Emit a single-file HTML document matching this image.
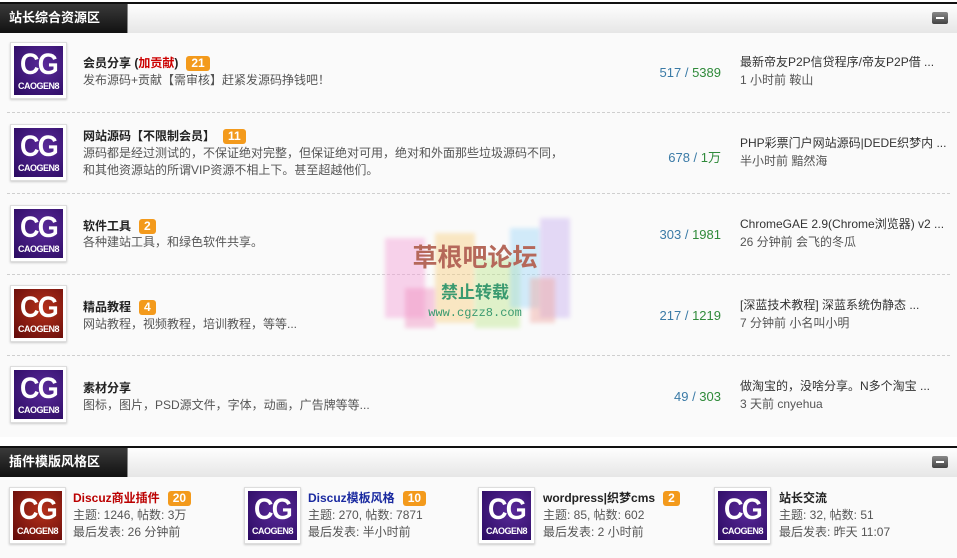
<!DOCTYPE html>
<html><head><meta charset="utf-8"><style>
*{margin:0;padding:0;box-sizing:border-box}
body{width:957px;height:558px;background:#fff;font:12px "Liberation Sans","Noto Sans CJK SC",sans-serif;color:#333;position:relative;overflow:hidden}
.hd{position:absolute;left:0;width:957px;height:31px;border-top:2px solid #111;background:linear-gradient(#fefefe,#e6e6e6)}
.tab{position:absolute;left:0;top:0;width:128px;height:29px;background:linear-gradient(#3a3a3a,#111);color:#fff;font-weight:bold;font-size:13px;line-height:27px;padding-left:9px;border-right:1px solid #888}
.mn{position:absolute;right:9px;top:8px;width:16px;height:12px;background:linear-gradient(#888,#444);border-radius:2px}
.mn:after{content:"";position:absolute;left:4px;top:5px;width:8px;height:2px;background:#fff}
.sec{position:absolute;left:0;width:957px;background:#fafafa}
.row{position:absolute;left:7px;width:943px;border-bottom:1px dashed #cfcfcf}
.ic{position:absolute;width:57px;height:57px;background:#fff;border:1px solid #ddd;box-shadow:0 1px 2px #ccc;padding:3px}
.ic div{width:49px;height:49px;color:#fff;text-align:center;font-weight:bold;font-family:"Liberation Sans",sans-serif}
.ic b{display:block;font-size:30px;line-height:32px;letter-spacing:-2px;padding-top:3px;transform:scaleX(.9)}
.ic i{display:block;font-style:normal;font-size:9px;line-height:10px;letter-spacing:-.5px}
.p{background:radial-gradient(circle at 60% 40%,#5a2a9a,#2a0a60)}
.r{background:radial-gradient(circle at 60% 40%,#b5301a,#600a0a)}
.t{position:absolute;font-weight:bold;color:#222;font-size:12px;white-space:nowrap}
.bd{display:inline-block;background:#f39a1c;color:#fff;border-radius:3px;padding:0 5px;font-weight:bold;line-height:15px;margin-left:8px}
.d{position:absolute;color:#555;white-space:nowrap;line-height:17px}
.st{position:absolute;right:229px;color:#3a7aa6;white-space:nowrap;font-size:13px}
.st span{color:#2f8a3a}
.lp{position:absolute;left:733px;color:#333;white-space:nowrap;line-height:18px}
.lp span{color:#555}
.wm{position:absolute;left:380px;top:218px;width:190px;height:118px}
.wm .b{position:absolute;opacity:.45;filter:blur(2px)}
</style></head><body>
<div class="hd" style="top:2px"><div class="tab">站长综合资源区</div><div class="mn"></div></div>
<div class="sec" style="top:33px;height:404px">
<div class="row" style="top:0;height:80px">
<div class="ic" style="left:3px;top:9px"><div class="p"><b>CG</b><i>CAOGEN8</i></div></div>
<div class="t" style="left:76px;top:21px">会员分享 (<span style="color:#c00">加贡献</span>)<span class="bd">21</span></div>
<div class="d" style="left:76px;top:39px">发布源码+贡献【需审核】赶紧发源码挣钱吧！</div>
<div class="st" style="top:32px">517 / <span>5389</span></div>
<div class="lp" style="top:20px">最新帝友P2P信贷程序/帝友P2P借 ...<br><span>1 小时前 鞍山</span></div>
</div>
<div class="row" style="top:81px;height:80px">
<div class="ic" style="left:3px;top:10px"><div class="p"><b>CG</b><i>CAOGEN8</i></div></div>
<div class="t" style="left:76px;top:13px">网站源码【不限制会员】<span class="bd">11</span></div>
<div class="d" style="left:76px;top:31px">源码都是经过测试的，不保证绝对完整，但保证绝对可用，绝对和外面那些垃圾源码不同，<br>和其他资源站的所谓VIP资源不相上下。甚至超越他们。</div>
<div class="st" style="top:33px">678 / <span>1万</span></div>
<div class="lp" style="top:20px">PHP彩票门户网站源码|DEDE织梦内 ...<br><span>半小时前 黯然海</span></div>
</div>
<div class="row" style="top:162px;height:80px">
<div class="ic" style="left:3px;top:10px"><div class="p"><b>CG</b><i>CAOGEN8</i></div></div>
<div class="t" style="left:76px;top:22px">软件工具<span class="bd">2</span></div>
<div class="d" style="left:76px;top:39px">各种建站工具，和绿色软件共享。</div>
<div class="st" style="top:32px">303 / <span>1981</span></div>
<div class="lp" style="top:20px">ChromeGAE 2.9(Chrome浏览器) v2 ...<br><span>26 分钟前 会飞的冬瓜</span></div>
</div>
<div class="row" style="top:243px;height:80px">
<div class="ic" style="left:3px;top:9px"><div class="r"><b>CG</b><i>CAOGEN8</i></div></div>
<div class="t" style="left:76px;top:22px">精品教程<span class="bd">4</span></div>
<div class="d" style="left:76px;top:40px">网站教程，视频教程，培训教程，等等...</div>
<div class="st" style="top:32px">217 / <span>1219</span></div>
<div class="lp" style="top:20px">[深蓝技术教程] 深蓝系统伪静态 ...<br><span>7 分钟前 小名叫小明</span></div>
</div>
<div class="row" style="top:324px;height:80px;border:0">
<div class="ic" style="left:3px;top:9px"><div class="p"><b>CG</b><i>CAOGEN8</i></div></div>
<div class="t" style="left:76px;top:22px">素材分享</div>
<div class="d" style="left:76px;top:40px">图标，图片，PSD源文件，字体，动画，广告牌等等...</div>
<div class="st" style="top:32px">49 / <span>303</span></div>
<div class="lp" style="top:20px">做淘宝的，没啥分享。N多个淘宝 ...<br><span>3 天前 cnyehua</span></div>
</div>
</div>
<div class="wm">
<div class="b" style="left:5px;top:20px;width:40px;height:80px;background:#f5a0d8"></div>
<div class="b" style="left:55px;top:15px;width:40px;height:90px;background:#f8d080"></div>
<div class="b" style="left:95px;top:40px;width:45px;height:70px;background:#c0e890"></div>
<div class="b" style="left:130px;top:10px;width:30px;height:80px;background:#a0d8f8"></div>
<div class="b" style="left:160px;top:0;width:30px;height:100px;background:#c8b0f0"></div>
<div class="b" style="left:25px;top:70px;width:30px;height:40px;background:#f090c0"></div>
<div class="b" style="left:150px;top:60px;width:25px;height:45px;background:#f0a8a0"></div>
<div style="position:absolute;left:0;top:20px;width:190px;text-align:center;font-size:25px;font-weight:bold;color:#b5685a">草根吧论坛</div>
<div style="position:absolute;left:0;top:60px;width:190px;text-align:center;font-size:17px;font-weight:bold;color:#3a9a70">禁止转载</div>
<div style="position:absolute;left:0;top:88px;width:190px;text-align:center;font-size:12px;color:#3a9a70;font-family:'Liberation Mono',monospace">www.cgzz8.com</div>
</div>
<div class="hd" style="top:446px"><div class="tab">插件模版风格区</div><div class="mn"></div></div>
<div class="sec" style="top:477px;height:81px">
<div class="ic" style="left:9px;top:10px"><div class="r"><b>CG</b><i>CAOGEN8</i></div></div>
<div class="t" style="left:73px;top:12px;color:#b00">Discuz商业插件<span class="bd">20</span></div>
<div class="d" style="left:73px;top:30px">主题: 1246, 帖数: 3万<br>最后发表: 26 分钟前</div>
<div class="ic" style="left:244px;top:10px"><div class="p"><b>CG</b><i>CAOGEN8</i></div></div>
<div class="t" style="left:308px;top:12px;color:#1a2aa0">Discuz模板风格<span class="bd">10</span></div>
<div class="d" style="left:308px;top:30px">主题: 270, 帖数: 7871<br>最后发表: 半小时前</div>
<div class="ic" style="left:478px;top:10px"><div class="p"><b>CG</b><i>CAOGEN8</i></div></div>
<div class="t" style="left:543px;top:12px">wordpress|织梦cms<span class="bd">2</span></div>
<div class="d" style="left:543px;top:30px">主题: 85, 帖数: 602<br>最后发表: 2 小时前</div>
<div class="ic" style="left:714px;top:10px"><div class="p"><b>CG</b><i>CAOGEN8</i></div></div>
<div class="t" style="left:779px;top:12px">站长交流</div>
<div class="d" style="left:779px;top:30px">主题: 32, 帖数: 51<br>最后发表: 昨天 11:07</div>
</div>
</body></html>
